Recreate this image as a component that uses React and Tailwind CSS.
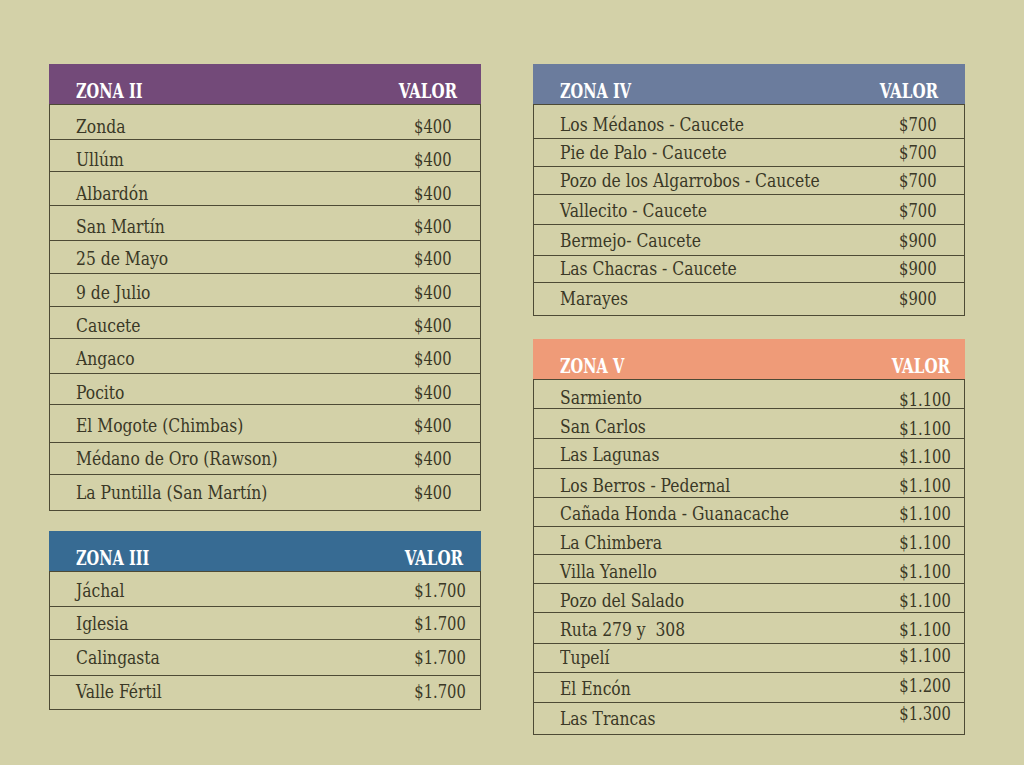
import React from "react";

const zonas = {
  II: {
    title: "ZONA II",
    head: "bg-[#734a79]",
    hpr: "pr-[24px]",
    vpr: "pr-[29px]",
    rows: [
      ["Zonda", "$400", "h-[35px] pb-[3px]"],
      ["Ullúm", "$400", "h-[32px] pb-[2px]"],
      ["Albardón", "$400", "h-[34px] pb-[2px]"],
      ["San Martín", "$400", "h-[35px] pb-[4px]"],
      ["25 de Mayo", "$400", "h-[33px] pb-[5px]"],
      ["9 de Julio", "$400", "h-[33px] pb-[4px]"],
      ["Caucete", "$400", "h-[32px] pb-[3px]"],
      ["Angaco", "$400", "h-[35px] pb-[5px]"],
      ["Pocito", "$400", "h-[31px] pb-[2px]"],
      ["El Mogote (Chimbas)", "$400", "h-[38px] pb-[7px]"],
      ["Médano de Oro (Rawson)", "$400", "h-[32px] pb-[6px]"],
      ["La Puntilla (San Martín)", "$400", "h-[36px] pb-[8px]"],
    ],
  },
  III: {
    title: "ZONA III",
    head: "bg-[#376b93]",
    hpr: "pr-[18px]",
    vpr: "pr-[14px]",
    rows: [
      ["Jáchal", "$1.700", "h-[35px] pb-[6px]"],
      ["Iglesia", "$1.700", "h-[33px] pb-[6px]"],
      ["Calingasta", "$1.700", "h-[36px] pb-[8px]"],
      ["Valle Fértil", "$1.700", "h-[34px] pb-[8px]"],
    ],
  },
  IV: {
    title: "ZONA IV",
    head: "bg-[#6b7c9d]",
    hpr: "pr-[27px]",
    vpr: "pr-[28px]",
    rows: [
      ["Los Médanos - Caucete", "$700", "h-[34px] pb-[4px]"],
      ["Pie de Palo - Caucete", "$700", "h-[28px] pb-[4px]"],
      ["Pozo de los Algarrobos - Caucete", "$700", "h-[28px] pb-[4px]"],
      ["Vallecito - Caucete", "$700", "h-[30px] pb-[4px]"],
      ["Bermejo- Caucete", "$900", "h-[31px] pb-[5px]"],
      ["Las Chacras - Caucete", "$900", "h-[27px] pb-[4px]"],
      ["Marayes", "$900", "h-[33px] pb-[7px]"],
    ],
  },
  V: {
    title: "ZONA V",
    head: "bg-[#ef9b78]",
    hpr: "pr-[15px]",
    vpr: "pr-[13px]",
    rows: [
      ["Sarmiento", "$1.100", "h-[29px] pb-[1px]", "translate-y-[2px]"],
      ["San Carlos", "$1.100", "h-[30px] pb-[2px]", "translate-y-[2px]"],
      ["Las Lagunas", "$1.100", "h-[30px] pb-[4px]", "translate-y-[2px]"],
      ["Los Berros - Pedernal", "$1.100", "h-[29px] pb-[2px]"],
      ["Cañada Honda - Guanacache", "$1.100", "h-[29px] pb-[3px]"],
      ["La Chimbera", "$1.100", "h-[28px] pb-[2px]"],
      ["Villa Yanello", "$1.100", "h-[29px] pb-[2px]"],
      ["Pozo del Salado", "$1.100", "h-[29px] pb-[2px]"],
      ["Ruta 279 y  308", "$1.100", "h-[31px] pb-[4px]"],
      ["Tupelí", "$1.100", "h-[29px] pb-[5px]", "-translate-y-[2px]"],
      ["El Encón", "$1.200", "h-[30px] pb-[4px]", "-translate-y-[3px]"],
      ["Las Trancas", "$1.300", "h-[32px] pb-[6px]", "-translate-y-[5px]"],
    ],
  },
};

function Zona({ z }) {
  return (
    <div className="w-[432px]">
      <div
        className={`h-[40px] flex items-start justify-between pt-[16px] pl-[27px] ${z.hpr} ${z.head} text-white font-bold text-[21px] leading-none`}
      >
        <span className="whitespace-pre origin-left scale-x-[0.77]">{z.title}</span>
        <span className="origin-right scale-x-[0.8]">VALOR</span>
      </div>
      <div className="border-x-[1.5px] border-b-[1.5px] border-[#4d4a35]">
        {z.rows.map(([name, val, h, vshift], i) => (
          <div
            key={i}
            className={`${h} flex items-end justify-between pl-[26px] ${z.vpr} border-t-[1.5px] border-[#4d4a35]`}
          >
            <span className="whitespace-pre origin-left scale-x-[0.91]">{name}</span>
            <span className={`origin-right scale-x-[0.86] ${vshift || ""}`}>{val}</span>
          </div>
        ))}
      </div>
    </div>
  );
}

export default function App() {
  return (
    <div
      className="w-[1024px] h-[765px] bg-[#d3d1a8] text-[#3a3826] text-[19px] leading-none flex gap-[52px] pl-[49px] pt-[64px]"
      style={{ fontFamily: '"DejaVu Serif Condensed", "DejaVu Serif", serif', fontStretch: "condensed" }}
    >
      <div className="flex flex-col gap-[20px]">
        <Zona z={zonas.II} />
        <Zona z={zonas.III} />
      </div>
      <div className="flex flex-col gap-[23px]">
        <Zona z={zonas.IV} />
        <Zona z={zonas.V} />
      </div>
    </div>
  );
}
